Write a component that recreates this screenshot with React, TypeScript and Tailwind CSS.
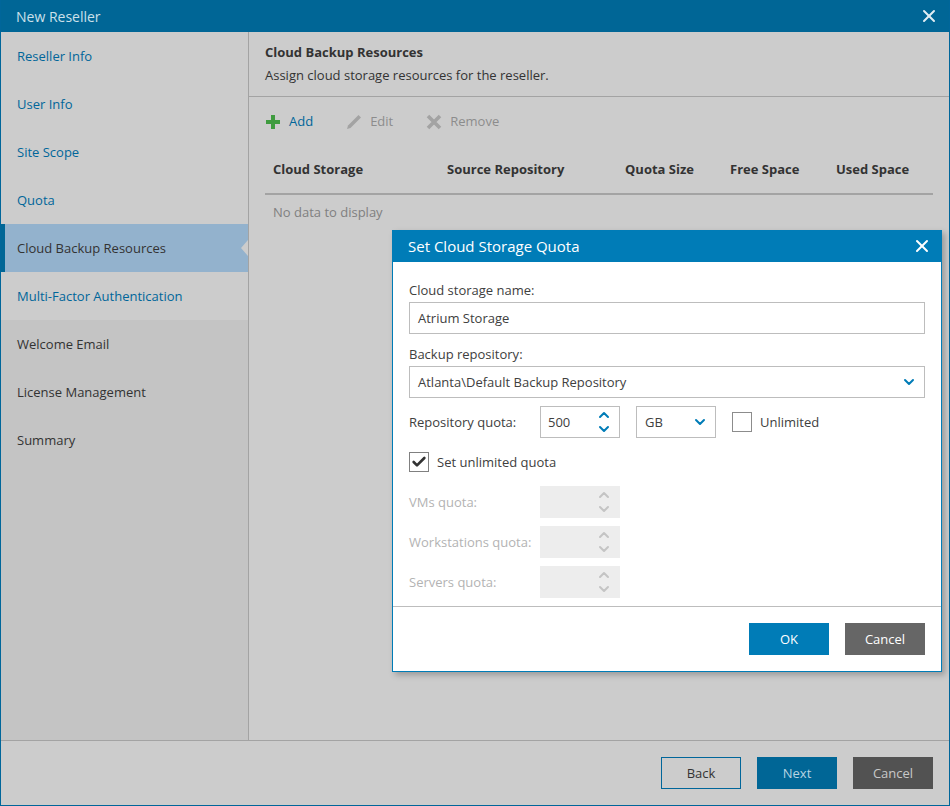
import { Check, ChevronDown, ChevronUp, X } from "lucide-react";

const navItems = [
  { label: "Reseller Info", tone: "link" },
  { label: "User Info", tone: "link" },
  { label: "Site Scope", tone: "link" },
  { label: "Quota", tone: "link" },
  { label: "Cloud Backup Resources", tone: "active" },
  { label: "Multi-Factor Authentication", tone: "link" },
  { label: "Welcome Email", tone: "todo" },
  { label: "License Management", tone: "todo" },
  { label: "Summary", tone: "todo" },
];

const columns = [
  { label: "Cloud Storage", width: "w-[174px]" },
  { label: "Source Repository", width: "w-[178px]" },
  { label: "Quota Size", width: "w-[105px]" },
  { label: "Free Space", width: "w-[106px]" },
  { label: "Used Space", width: "w-[105px]" },
];

const Spinner = ({ value, disabled }: { value?: string; disabled?: boolean }) => (
  <div
    className={`flex h-8 w-20 items-center justify-between pl-[7px] pr-[7px] ${
      disabled ? "bg-[#ededed] pr-[8px] text-[#c4c4c4]" : "border border-[#bdbdbd] text-[#404040]"
    }`}
  >
    <span className="pt-[2px]">{value}</span>
    <div className={`flex flex-col ${disabled ? "text-[#c4c4c4]" : "text-[#007cb7]"}`}>
      <ChevronUp size={16} strokeWidth={3} className="-mb-[2px]" />
      <ChevronDown size={16} strokeWidth={3} />
    </div>
  </div>
);

const App = () => {
  return (
    <div className="relative flex h-[806px] w-[950px] flex-col overflow-hidden border border-t-0 border-[#00669a] bg-[#cccccc] font-['Open_Sans',sans-serif] text-[13px] text-[#333333]">
      <header className="-mx-[1px] flex h-8 shrink-0 items-center justify-between bg-[#006696] pl-4 pr-[11px] text-sm text-[#cce0ea]">
        <span className="pt-[2px]">New Reseller</span>
        <X size={20} strokeWidth={2.4} className="text-[#e0edf3]" />
      </header>

      <div className="flex min-h-0 flex-1">
        <nav className="flex w-[247px] shrink-0 flex-col bg-[#c4c4c4]">
          {navItems.map((item, index) => (
            <div
              key={item.label}
              className={`relative flex h-12 items-center pt-[2px] ${
                item.tone === "active"
                  ? "border-l-4 border-[#006696] bg-[#93b2cd] pl-3 text-[#333333]"
                  : `pl-4 ${index < 6 ? "bg-[#cccccc]" : ""} ${item.tone === "link" ? "text-[#00669a]" : "text-[#333333]"}`
              }`}
            >
              {item.label}
              {item.tone === "active" && (
                <span className="absolute right-0 top-[16px] h-0 w-0 border-y-[8px] border-r-[7px] border-y-transparent border-r-[#cccccc]" />
              )}
            </div>
          ))}
        </nav>

        <main className="flex min-w-0 flex-1 flex-col border-l border-[#a3a3a3]">
          <div className="flex h-[65px] shrink-0 flex-col gap-[5px] border-b border-[#a3a3a3] pl-4 pt-[11px]">
            <div className="font-bold leading-[18px] text-[#333333]">Cloud Backup Resources</div>
            <div className="leading-[18px]">Assign cloud storage resources for the reseller.</div>
          </div>

          <div className="flex h-[48px] items-center gap-[33px] pl-[17px] pt-[1px]">
            <div className="flex items-center gap-[9px] text-[#00669a]">
              <svg width="14" height="14" viewBox="0 0 14 14" className="text-[#3f9b3f]">
                <path d="M5 0h4v5h5v4H9v5H5V9H0V5h5z" fill="currentColor" />
              </svg>
              Add
            </div>
            <div className="flex items-center gap-[8px] text-[#8c8c8c]">
              <svg width="16" height="16" viewBox="0 0 16 16" className="text-[#a3a3a3]">
                <path d="M12.5 1 15 3.5 4.5 14 1 15l1-3.500z" fill="currentColor" />
              </svg>
              Edit
            </div>
            <div className="flex items-center gap-[8px] text-[#8c8c8c]">
              <svg width="16" height="16" viewBox="0 0 16 16" className="text-[#a3a3a3]">
                <path d="M2 2l12 12M14 2 2 14" stroke="currentColor" strokeWidth="3.6" />
              </svg>
              Remove
            </div>
          </div>

          <div className="ml-4 mr-4 flex h-[50px] items-center border-b-2 border-[#a3a3a3] pl-2 pt-[2px] font-bold">
            {columns.map((col) => (
              <div key={col.label} className={`${col.width} shrink-0`}>
                {col.label}
              </div>
            ))}
          </div>
          <div className="pl-6 pt-[8px] text-[#808080]">No data to display</div>
        </main>
      </div>

      <footer className="flex h-[65px] shrink-0 items-center justify-end gap-4 border-t border-[#a3a3a3] pb-[1px] pr-4">
        <button className="h-8 w-20 border border-[#00669a] pt-[2px] text-[#333333]">Back</button>
        <button className="h-8 w-20 bg-[#006696] pt-[2px] text-[#b8d4e2]">Next</button>
        <button className="h-8 w-20 bg-[#525252] pt-[2px] text-[#c8c8c8]">Cancel</button>
      </footer>

      {/* modal sits over the masked wizard */}
      <section className="absolute left-[391px] top-[230px] flex h-[442px] w-[550px] flex-col border border-t-0 border-[#007cb7] bg-white shadow-[3px_3px_6px_rgba(0,0,0,0.25)]">
        <div className="-mx-[1px] flex h-8 shrink-0 items-center justify-between bg-[#007cb7] pl-4 pr-[10px] text-[15px] text-white">
          <span className="pt-[1px]">Set Cloud Storage Quota</span>
          <X size={20} strokeWidth={2.4} />
        </div>

        <div className="flex flex-1 flex-col px-4 text-[#404040]">
          <label className="mt-[19px] leading-[18px]">Cloud storage name:</label>
          <div className="mt-[3px] flex h-8 items-center border border-[#bdbdbd] pl-2 pt-[2px]">Atrium Storage</div>

          <label className="mt-[11px] leading-[18px]">Backup repository:</label>
          <div className="mt-[3px] flex h-8 items-center justify-between border border-[#bdbdbd] pl-2 pr-[7px]">
            <span className="pt-[2px]">Atlanta\Default Backup Repository</span>
            <ChevronDown size={16} strokeWidth={3} className="text-[#007cb7]" />
          </div>

          <div className="mt-2 flex items-center">
            <span className="w-[131px] pt-[2px]">Repository quota:</span>
            <Spinner value="500" />
            <div className="ml-4 flex h-8 w-20 items-center justify-between border border-[#bdbdbd] pl-2 pr-[7px]">
              <span className="pt-[2px]">GB</span>
              <ChevronDown size={16} strokeWidth={3} className="text-[#007cb7]" />
            </div>
            <span className="ml-4 h-5 w-5 border border-[#8c8c8c]" />
            <span className="ml-2 pt-[2px]">Unlimited</span>
          </div>

          <div className="mt-[14px] flex h-5 items-center gap-2">
            <span className="flex h-5 w-5 items-center justify-center border border-[#808080]">
              <Check size={16} strokeWidth={4} className="text-[#333333]" />
            </span>
            <span className="leading-[18px]">Set unlimited quota</span>
          </div>

          <div className="mt-[14px] flex flex-col gap-2 text-[#b3b3b3]">
            {["VMs quota:", "Workstations quota:", "Servers quota:"].map((label) => (
              <div key={label} className="flex items-center">
                <span className="w-[131px] pt-[2px]">{label}</span>
                <Spinner disabled />
              </div>
            ))}
          </div>
        </div>

        <div className="flex h-[65px] shrink-0 items-center justify-end gap-4 border-t border-[#bdbdbd] pr-4">
          <button className="h-8 w-20 bg-[#007cb7] pt-[2px] text-white">OK</button>
          <button className="h-8 w-20 bg-[#666666] pt-[2px] text-white">Cancel</button>
        </div>
      </section>
    </div>
  );
};

export default App;
